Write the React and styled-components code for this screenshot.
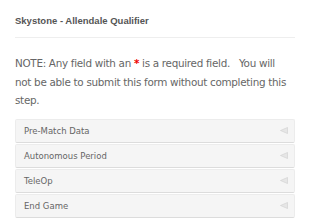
import React from "react";
import styled, { createGlobalStyle } from "styled-components";

const Global = createGlobalStyle`
  html, body { margin: 0; padding: 0; background: #fff; }
  body { font-family: "DejaVu Sans", Verdana, sans-serif; }
`;

const Page = styled.div`
  padding: 0 15px;
`;

const Title = styled.h1`
  margin: 0;
  padding-top: 15px;
  padding-bottom: 11px;
  font-family: "Liberation Sans", Arial, sans-serif;
  font-weight: bold;
  font-size: 9.5px;
  line-height: 11px;
  color: #555;
  border-bottom: 1px solid #eee;
`;

const Note = styled.p`
  margin: 16px 0 0;
  font-size: 10.4px;
  line-height: 18.5px;
  letter-spacing: -0.3px;
  color: #666;
`;

const Star = styled.span`
  color: #e00;
  font-weight: bold;
`;

const Panels = styled.div`
  margin-top: 9px;
  display: flex;
  flex-direction: column;
  gap: 1px;
`;

const Panel = styled.div`
  height: 22px;
  display: flex;
  align-items: center;
  justify-content: space-between;
  padding: 0 6px 0 8px;
  background: #f5f5f5;
  border: 1px solid #ececec;
  border-bottom-color: #dcdcdc;
  border-radius: 2px;
  font-size: 8.5px;
  color: #666;
`;

const Arrow = styled.svg`
  width: 8px;
  height: 7px;
`;

const items = ["Pre-Match Data", "Autonomous Period", "TeleOp", "End Game"];

export default function App() {
  return (
    <Page>
      <Global />
      <Title>Skystone - Allendale Qualifier</Title>
      <Note>
        NOTE: Any field with an <Star>*</Star> is a required field.&nbsp;&nbsp; You will
        <br />
        not be able to submit this form without completing this step.
      </Note>
      <Panels>
        {items.map((t) => (
          <Panel key={t}>
            <span>{t}</span>
            <Arrow viewBox="0 0 8 7">
              <path d="M0.5 3.5 L7.5 0.5 L7.5 6.5 Z" fill="#e6e6e6" stroke="#d2d2d2" strokeWidth="0.7" />
            </Arrow>
          </Panel>
        ))}
      </Panels>
    </Page>
  );
}
